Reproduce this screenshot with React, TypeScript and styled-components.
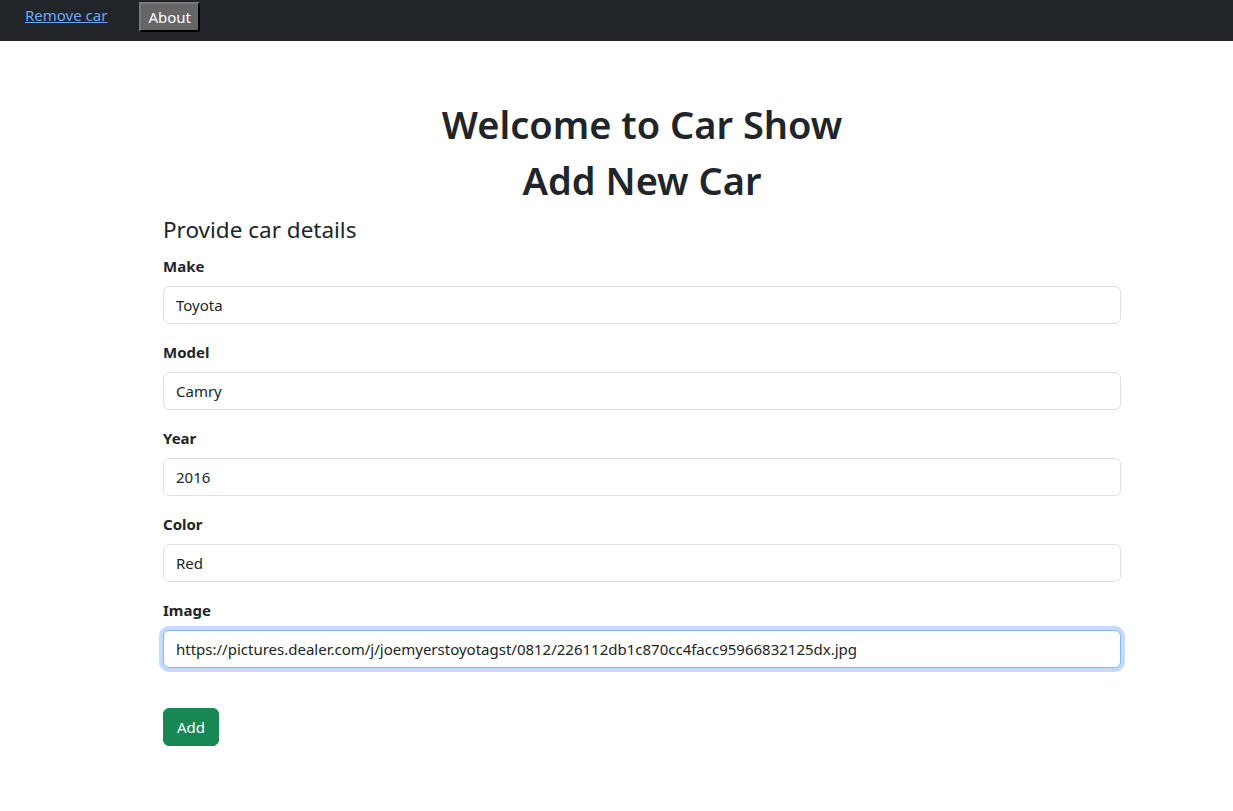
import React from "react";
import styled, { createGlobalStyle } from "styled-components";

const Global = createGlobalStyle`
  body {
    margin: 0;
    font-family: "Noto Sans", "Open Sans", sans-serif;
    color: #212529;
    background: #fff;
  }
  * { box-sizing: border-box; }
`;

const NavBar = styled.nav`
  height: 41px;
  background: #212529;
  display: flex;
  align-items: flex-start;
  padding-left: 25px;
  gap: 32px;
`;

const NavLink = styled.a`
  color: #6ea8fe;
  font-size: 15px;
  text-decoration: underline;
  margin-top: 5px;
  line-height: 20px;
  cursor: pointer;
`;

const NavButton = styled.button`
  margin-top: 2px;
  height: 30px;
  padding: 0 7px;
  background: #666666;
  color: #fff;
  font-family: inherit;
  font-size: 15px;
  border: 2px outset #7a7a7a;
  border-right-color: #333;
  border-bottom-color: #333;
`;

const Container = styled.main`
  width: 958px;
  margin-left: 163px;
  padding-top: 59px;
`;

const Title = styled.h1`
  margin: 0 0 8px;
  font-size: 38px;
  font-weight: 600;
  line-height: 48px;
  text-align: center;
`;

const SubTitle = styled.h4`
  margin: 12px 0 10px;
  font-size: 22.5px;
  font-weight: 400;
  line-height: 28px;
`;

const Field = styled.div`
  margin-bottom: 16px;
`;

const Label = styled.label`
  display: block;
  font-weight: 700;
  font-size: 15px;
  line-height: 24px;
  margin-bottom: 8px;
`;

const Input = styled.input<{ $focus?: boolean }>`
  display: block;
  width: 100%;
  height: 38px;
  padding: 6px 12px;
  font-family: inherit;
  font-size: 15px;
  color: #212529;
  border: 1px solid ${(p) => (p.$focus ? "#86b7fe" : "#dee2e6")};
  border-radius: 6px;
  outline: none;
  box-shadow: ${(p) => (p.$focus ? "0 0 0 4px rgba(13,110,253,.25)" : "none")};
`;

const AddButton = styled.button`
  margin-top: 24px;
  height: 38px;
  padding: 0 13px;
  background: #198754;
  color: #fff;
  border: 1px solid #198754;
  border-radius: 6px;
  font-family: inherit;
  font-size: 15px;
`;

const fields = [
  { label: "Make", value: "Toyota" },
  { label: "Model", value: "Camry" },
  { label: "Year", value: "2016" },
  { label: "Color", value: "Red" },
  {
    label: "Image",
    value:
      "https://pictures.dealer.com/j/joemyerstoyotagst/0812/226112db1c870cc4facc95966832125dx.jpg",
    focus: true,
  },
];

export default function App() {
  return (
    <>
      <Global />
      <NavBar>
        <NavLink>Remove car</NavLink>
        <NavButton>About</NavButton>
      </NavBar>
      <Container>
        <Title>Welcome to Car Show</Title>
        <Title>Add New Car</Title>
        <SubTitle>Provide car details</SubTitle>
        {fields.map((f) => (
          <Field key={f.label}>
            <Label>{f.label}</Label>
            <Input $focus={f.focus} defaultValue={f.value} readOnly />
          </Field>
        ))}
        <AddButton>Add</AddButton>
      </Container>
    </>
  );
}
